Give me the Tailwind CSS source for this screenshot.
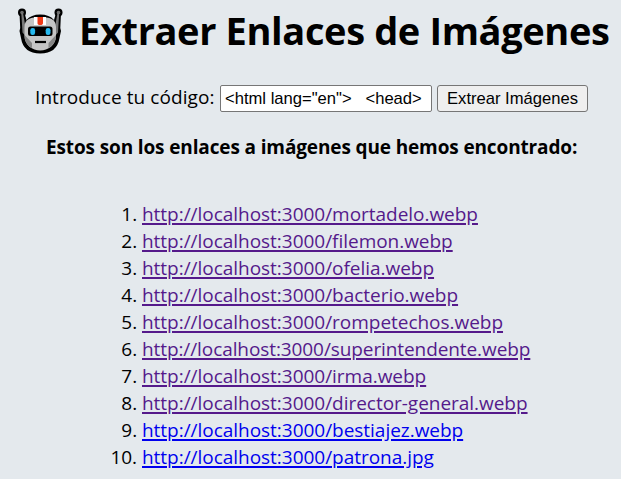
<!DOCTYPE html>
<html lang="es">
<head>
<meta charset="utf-8">
<title>Extraer Enlaces de Imágenes</title>
<script src="https://cdn.jsdelivr.net/npm/@tailwindcss/browser@4"></script>
</head>
<body class="h-[479px] overflow-hidden bg-[#e4e9ed] text-black font-['Open_Sans','Noto_Sans',sans-serif] text-[19px] leading-[27px] whitespace-nowrap">
<header class="flex h-[64px] pl-[17px]">
  <svg class="mt-[8px] h-[47px] w-[47px] shrink-0" viewBox="0 0 47 47">
    <circle cx="5" cy="4.600" r="4"/><circle cx="41.500" cy="4.600" r="4"/>
    <path d="M2.500 5H7.500L9.500 12Q14 6.500 23.200 6.500T37 12L39 5H44L43.300 20L44 23L42.500 30Q40 45.500 23.200 45.500T4 30L2.500 23L3.200 20Z"/>
    <circle cx="5" cy="4.600" r="1.800" fill="#6d6d6d"/><circle cx="41.500" cy="4.600" r="1.800" fill="#6d6d6d"/>
    <path d="M4.300 5H6L8.500 19V28L5.500 24.500ZM42.200 5H40.500L38 19V28L41 24.500Z" fill="#777"/>
    <path d="M7.500 19C7.500 11 14 9 23.200 9S39 11 39 19V28C39 37 31 42.500 23.200 42.500S7.500 37 7.500 28Z" fill="#c5c5c5"/>
    <path d="M7.500 27L15 35V40C11 38 7.500 34 7.500 27ZM39 27L31.500 35V40C35.500 38 39 34 39 27Z" fill="#858585"/>
    <path d="M17 9H29V17H17Z" fill="#fff"/>
    <path d="M20.500 9H26V15Q26 17 23.200 17T20.500 15Z" fill="#ef3a18"/>
    <rect x="11" y="18.500" width="24.500" height="9.500" rx="2.500"/>
    <rect x="13.300" y="20" width="4.800" height="7" rx="2.200" fill="#26b9ef"/>
    <rect x="28.700" y="20" width="4.800" height="7" rx="2.200" fill="#26b9ef"/>
    <path d="M18 34H29" stroke="#000" stroke-width="2.200"/>
  </svg>
  <h1 class="ml-[15px] mt-[3px] text-[38px] leading-[54px] font-bold tracking-[-0.37px]">Extraer Enlaces de Imágenes</h1>
</header>
<form class="flex h-[52px] items-start pt-[20px] pl-[35px]">
  <label for="code" class="w-[185px] tracking-[0.08px]">Introduce tu código:</label>
  <input id="code" value="&lt;html lang=&quot;en&quot;&gt;   &lt;head&gt;" class="mt-px h-[27px] w-[212px] rounded-[2px] border border-[#767676] bg-white px-[4px] font-['Liberation_Sans',Arial,sans-serif] text-[16.6px]">
  <button type="button" class="mt-px ml-[5px] h-[27px] w-[151px] rounded-[3px] border border-[#767676] bg-[#efefef] font-['Liberation_Sans',Arial,sans-serif] text-[16.6px] leading-[24px]">Extrear Imágenes</button>
</form>
<h2 class="mt-[18px] pl-[46px] font-bold tracking-[-0.13px]">Estos son los enlaces a imágenes que hemos encontrado:</h2>
<ol class="mt-[40px] ml-[142px] list-decimal tracking-[-0.03px]">
  <li><a href="#" class="text-[#551a8b] underline decoration-2 underline-offset-2">http://localhost:3000/mortadelo.webp</a></li>
  <li><a href="#" class="text-[#551a8b] underline decoration-2 underline-offset-2">http://localhost:3000/filemon.webp</a></li>
  <li><a href="#" class="text-[#551a8b] underline decoration-2 underline-offset-2">http://localhost:3000/ofelia.webp</a></li>
  <li><a href="#" class="text-[#551a8b] underline decoration-2 underline-offset-2">http://localhost:3000/bacterio.webp</a></li>
  <li><a href="#" class="text-[#551a8b] underline decoration-2 underline-offset-2">http://localhost:3000/rompetechos.webp</a></li>
  <li><a href="#" class="text-[#551a8b] underline decoration-2 underline-offset-2 tracking-[-0.09px]">http://localhost:3000/superintendente.webp</a></li>
  <li><a href="#" class="text-[#551a8b] underline decoration-2 underline-offset-2">http://localhost:3000/irma.webp</a></li>
  <li><a href="#" class="text-[#551a8b] underline decoration-2 underline-offset-2">http://localhost:3000/director-general.webp</a></li>
  <li><a href="#" class="text-[#0000ee] underline decoration-2 underline-offset-2">http://localhost:3000/bestiajez.webp</a></li>
  <li><a href="#" class="text-[#0000ee] underline decoration-2 underline-offset-2">http://localhost:3000/patrona.jpg</a></li>
</ol>
</body>
</html>
